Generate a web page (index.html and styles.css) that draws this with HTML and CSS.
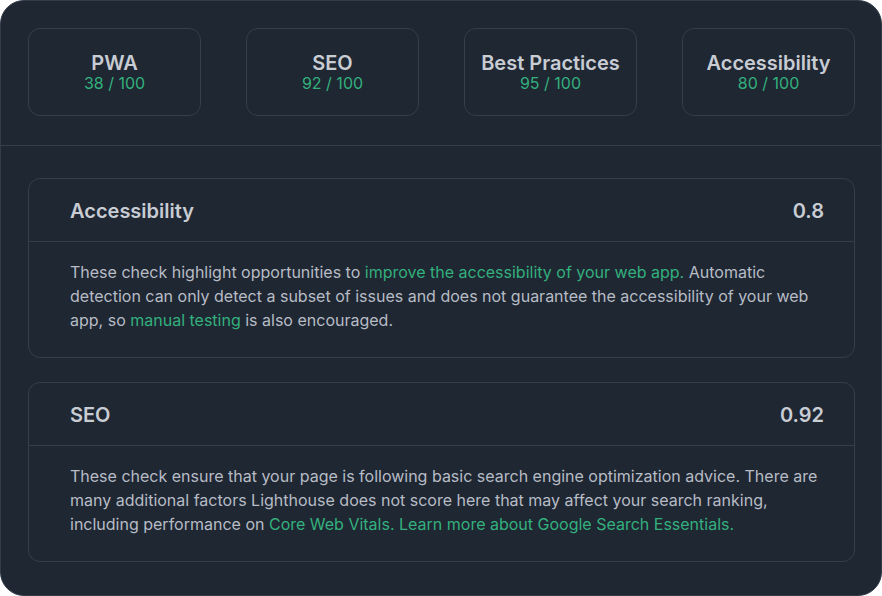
FILE: index.html
```html
<!DOCTYPE html>
<html lang="en">
<head>
<meta charset="utf-8">
<title>Lighthouse scores</title>
<link rel="stylesheet" href="styles.css">
</head>
<body>
<div class="panel">
  <div class="scores">
    <div class="score-card"><div class="score-title">PWA</div><div class="score-value">38 / 100</div></div>
    <div class="score-card"><div class="score-title">SEO</div><div class="score-value">92 / 100</div></div>
    <div class="score-card"><div class="score-title">Best Practices</div><div class="score-value">95 / 100</div></div>
    <div class="score-card"><div class="score-title">Accessibility</div><div class="score-value">80 / 100</div></div>
  </div>
  <div class="sections">
    <div class="section">
      <div class="section-head"><span class="section-title">Accessibility</span><span class="section-score">0.8</span></div>
      <p class="section-body">These check highlight opportunities to <a class="link">improve the accessibility of your web app.</a> Automatic detection can only detect a subset of issues and does not guarantee the accessibility of your web app, so <a class="link">manual testing</a> is also encouraged.</p>
    </div>
    <div class="section">
      <div class="section-head"><span class="section-title">SEO</span><span class="section-score">0.92</span></div>
      <p class="section-body">These check ensure that your page is following basic search engine optimization advice. There are many additional factors Lighthouse does not score here that may affect your search ranking, including performance on <a class="link">Core Web Vitals. Learn more about Google Search Essentials.</a></p>
    </div>
  </div>
</div>
</body>
</html>
```

FILE: styles.css
```css
* { box-sizing: border-box; }
html, body { margin: 0; padding: 0; background: #ffffff; }
body { font-family: Inter, "Noto Sans", sans-serif; }

.panel {
  width: 882px;
  height: 596px;
  background: #1f2733;
  border: 1px solid #323b48;
  border-radius: 24px;
  overflow: hidden;
}

.scores {
  display: grid;
  grid-template-columns: repeat(4, 1fr);
  gap: 45px;
  padding: 27px 26px 29px 27px;
  border-bottom: 1px solid #353e4b;
}

.score-card {
  height: 88px;
  padding-bottom: 1px;
  border: 1px solid #353e4b;
  border-radius: 12px;
  display: flex;
  flex-direction: column;
  align-items: center;
  justify-content: center;
}

.score-title {
  font-size: 20px;
  line-height: 24px;
  font-weight: 600;
  color: #c8ccd3;
}

.score-value {
  font-size: 16px;
  line-height: 20px;
  color: #33b07d;
  margin-top: -2px;
}

.sections {
  display: flex;
  flex-direction: column;
  gap: 24px;
  padding: 32px 26px 33px 27px;
}

.section {
  border: 1px solid #353e4b;
  border-radius: 12px;
}

.section-head {
  display: flex;
  justify-content: space-between;
  align-items: center;
  padding: 20px 30px 18px 41px;
  border-bottom: 1px solid #353e4b;
  font-size: 20px;
  line-height: 24px;
  font-weight: 600;
  color: #c8ccd3;
}

.section-body {
  margin: 0;
  padding: 18px 28px 25px 41px;
  font-size: 16px;
  line-height: 24px;
  color: #b7bcc5;
}

.link {
  color: #33b07d;
  text-decoration: none;
}
```
